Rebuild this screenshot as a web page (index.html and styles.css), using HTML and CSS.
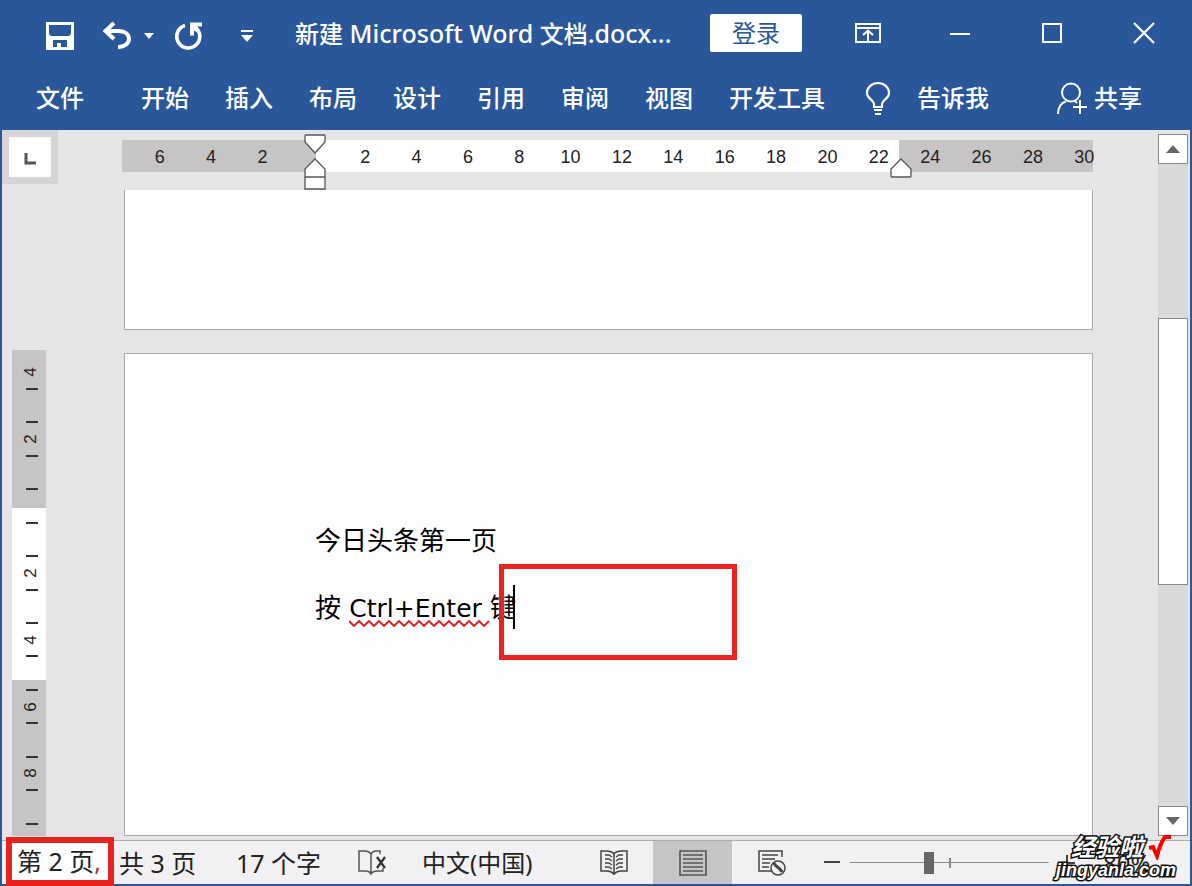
FILE: index.html
```html
<!DOCTYPE html>
<html lang="zh-CN">
<head>
<meta charset="utf-8">
<meta name="viewport" content="width=device-width, initial-scale=1">
<title>新建 Microsoft Word 文档.docx</title>
<link rel="stylesheet" href="styles.css">
</head>
<body>
<div class="window">
  <header class="titlebar">
    <div class="quick">
      <button class="icon-btn save" aria-label="保存"><svg width="30" height="30" viewBox="0 0 30 30"><path fill="#fff" fill-rule="evenodd" d="M1 1h28v28H1zM4 4v9l2 2h18l2-2V4zM8 19v7h14v-7zM12 22h4v4h-4z"/></svg></button>
      <button class="icon-btn undo" aria-label="撤消"><svg width="32" height="30" viewBox="0 0 32 30" fill="none" stroke="#fff" stroke-width="4"><path d="M13 2L4.500 10 13 18M5 10H17C25 10 28 14 28 18S24 26 17 26"/></svg></button>
      <button class="icon-btn undo-more" aria-label="撤消列表"><svg width="12" height="8" viewBox="0 0 12 8"><path fill="#fff" d="M1 1h10L6 7z"/></svg></button>
      <button class="icon-btn redo" aria-label="重复"><svg width="28" height="30" viewBox="0 0 28 30"><path fill="none" stroke="#fff" stroke-width="3.600" d="M10 4.500A11.500 11.500 0 1 0 21 7"/><path fill="#fff" d="M15 1.500h12v4h-5l3 4-3 2-3-2v5h-4z"/></svg></button>
      <button class="icon-btn customize" aria-label="自定义快速访问工具栏"><svg width="14" height="14" viewBox="0 0 14 14"><path fill="#fff" d="M1 1h12v2H1zM1 6h12L7 13z"/></svg></button>
    </div>
    <h1 class="title">新建<span class="latin"> Microsoft Word </span>文档<span class="latin">.docx...</span></h1>
    <button class="login">登录</button>
    <div class="controls">
      <button class="icon-btn" aria-label="功能区显示选项"><svg width="28" height="22" viewBox="0 0 28 22" fill="none" stroke="#fff" stroke-width="2"><path d="M2 2h24v18H2zM2 6h24M14 19V9M9 13l5-4.500 5 4.500"/></svg></button>
      <button class="icon-btn" aria-label="最小化"><svg width="22" height="22" viewBox="0 0 22 22"><path d="M1 12h20" stroke="#fff" stroke-width="2"/></svg></button>
      <button class="icon-btn" aria-label="最大化"><svg width="22" height="22" viewBox="0 0 22 22"><path d="M2 2h18v18H2z" fill="none" stroke="#fff" stroke-width="2"/></svg></button>
      <button class="icon-btn" aria-label="关闭"><svg width="22" height="22" viewBox="0 0 22 22"><path d="M1 1l20 20M21 1L1 21" stroke="#fff" stroke-width="2.200"/></svg></button>
    </div>
  </header>

  <nav class="ribbon">
    <button class="tab file">文件</button>
    <button class="tab">开始</button>
    <button class="tab">插入</button>
    <button class="tab">布局</button>
    <button class="tab">设计</button>
    <button class="tab">引用</button>
    <button class="tab">审阅</button>
    <button class="tab">视图</button>
    <button class="tab">开发工具</button>
    <button class="tab tell"><svg width="26" height="34" viewBox="0 0 26 34" fill="none" stroke="#fff" stroke-width="2.200"><path d="M9 26V23C9 19 2 18 2 12A11 10 0 0 1 24 12C24 18 17 19 17 23V26zM9 29h8M10 33h6"/></svg>告诉我</button>
    <button class="tab share"><svg width="32" height="34" viewBox="0 0 32 34" fill="none" stroke="#fff" stroke-width="2"><circle cx="15" cy="11.500" r="9"/><path d="M2 33C2 26 5 22 10 20.500M24 19v14M17 26h14M19 20l2 2"/></svg>共享</button>
  </nav>

  <main class="workspace">
    <aside class="left">
      <button class="tab-stop" aria-label="左对齐制表符"><svg width="12" height="12" viewBox="0 0 12 12"><path d="M2 0v10h10" fill="none" stroke="#555" stroke-width="3"/></svg></button>
      <div class="vruler">
        <span>4</span><i></i><b></b><i></i><span>2</span><i></i><b></b><i></i><b></b><i></i><b></b><i></i><span>2</span><i></i><b></b><i></i><span>4</span><i></i><b></b><i></i><span>6</span><i></i><b></b><i></i><span>8</span><i></i><b></b><i></i>
      </div>
    </aside>

    <section class="center">
      <div class="hruler">
        <div class="scale">
          <span>6</span><span>4</span><span>2</span>
          <span class="zero"><svg class="indent" width="24" height="58" viewBox="0 0 24 58" fill="#fff" stroke="#555" stroke-width="1.300"><path d="M3 2h18q1 0 1 1v6L12 20 2 9V3q0-1 1-1zM12 26l10 10v20H2V36zM2 44h20"/></svg></span>
          <span>2</span><span>4</span><span>6</span><span>8</span><span>10</span><span>12</span><span>14</span><span>16</span><span>18</span><span>20</span><span>22</span><span class="margin-end"><svg class="right-indent" width="24" height="22" viewBox="0 0 24 22" fill="#fff" stroke="#555" stroke-width="1.300"><path d="M12 2l10 10v7q0 1-1 1H3q-1 0-1-1v-7z"/></svg>24</span><span>26</span><span>28</span><span>30</span>
        </div>
      </div>
      <article class="page page-prev"></article>
      <article class="page page-current">
        <p>今日头条第一页</p>
        <p>按 <span class="typo">Ctrl+Enter<svg class="squiggle" height="7" width="142" viewBox="0 0 142 7"><path fill="none" stroke="#d32a2a" stroke-width="2" d="M0 1l5 5 5-5 5 5 5-5 5 5 5-5 5 5 5-5 5 5 5-5 5 5 5-5 5 5 5-5 5 5 5-5 5 5 5-5 5 5 5-5 5 5 5-5 5 5 5-5 5 5 5-5 5 5 5-5"/></svg></span> <span class="caret-host">键<span class="highlight"></span><span class="caret"></span></span></p>
      </article>
    </section>

    <aside class="scrollbar">
      <button class="scroll-btn" aria-label="向上滚动"><svg width="16" height="10" viewBox="0 0 16 10"><path fill="#666" d="M1 9h14L8 1z"/></svg></button>
      <div class="track"><div class="thumb"></div></div>
      <button class="scroll-btn" aria-label="向下滚动"><svg width="16" height="10" viewBox="0 0 16 10"><path fill="#666" d="M1 1h14L8 9z"/></svg></button>
    </aside>
  </main>

  <footer class="status">
    <div class="page-no"><span class="current">第 2 页<em>,</em></span><span>共 3 页</span></div>
    <span class="words">17 个字</span>
    <button class="icon-btn proof" aria-label="校对"><svg width="30" height="28" viewBox="0 0 30 28" fill="none" stroke="#555" stroke-width="1.500"><path d="M13 5C11 2 8 2 6 2H1v20h7c3 0 4 1 5 3 1-2 3-3 7-3h5v-3M13 5v20M13 5c1-2 3-3 5-3h4v3"/><path stroke="#333" stroke-width="2.200" d="M19 8l8 11M27 8l-8 11"/></svg></button>
    <span class="language">中文(中国)</span>
    <div class="views">
      <button class="view" aria-label="阅读视图"><svg width="28" height="28" viewBox="0 0 28 28" fill="none" stroke="#444" stroke-width="1.500"><path d="M14 5C12 2 9 2 6 2H1v20h6c3 0 5 1 7 3 2-2 4-3 7-3h6V2h-5c-3 0-6 0-8 3zM14 5v21M5 6h4l3 2M5 10h4l3 2M5 14h4l3 2M5 18h4l3 2M23 6h-4l-3 2M23 10h-4l-3 2M23 14h-4l-3 2M23 18h-4l-3 2"/></svg></button>
      <button class="view active" aria-label="页面视图"><svg width="28" height="26" viewBox="0 0 28 26" fill="none" stroke="#555" stroke-width="1.600"><path d="M1 1h26v24H1zM4 5h20M4 9h20M4 13h20M4 17h20M4 21h20"/></svg></button>
      <button class="view" aria-label="Web 版式视图"><svg width="28" height="28" viewBox="0 0 28 28" fill="none" stroke="#444" stroke-width="1.500"><path d="M13 22H1V2h23v6M4 6h16M4 10h13M4 14h8M4 18h7"/><circle cx="20" cy="19" r="7"/><path stroke-width="3" d="M16 14c1 4 6 4 8 9"/></svg></button>
    </div>
    <div class="zoom">
      <button class="icon-btn" aria-label="缩小"><svg width="16" height="6" viewBox="0 0 16 6"><path fill="#444" d="M0 1h16v2H0z"/></svg></button>
      <input class="slider" type="range" min="0" max="200" value="78" aria-label="显示比例">
      <button class="icon-btn" aria-label="放大"><svg width="16" height="16" viewBox="0 0 16 16"><path fill="#444" d="M7 0h2v7h7v2H9v7H7V9H0V7h7z"/></svg></button>
      <span class="percent">80%</span>
    </div>
    <div class="watermark"><span class="brand">经验啦<svg width="24" height="26" viewBox="0 0 24 26"><path d="M2 14l4-1 4 9C12 14 15 7 18 3h6" fill="none" stroke="#f00" stroke-width="4"/></svg></span><span class="domain">jingyanla.com</span></div>
  </footer>
</div>
</body>
</html>
```

FILE: styles.css
```css
* { box-sizing: border-box; }

body {
  margin: 0;
  font-family: "Noto Sans", "Noto Sans CJK SC", sans-serif;
  color: #222;
}

button {
  margin: 0;
  padding: 0;
  border: 0;
  background: none;
  color: inherit;
  font: inherit;
}

svg { display: block; flex: none; }

.window {
  display: flex;
  flex-direction: column;
  min-height: 100vh;
  border: solid #2a579a;
  border-width: 0 2px 2px;
  background: #e6e4e6;
}

/* Title bar */
.titlebar {
  display: flex;
  align-items: center;
  height: 66px;
  background: #2a579a;
  color: #fff;
}

.icon-btn {
  display: flex;
  align-items: center;
  justify-content: center;
}

.quick {
  display: flex;
  align-items: center;
  width: 293px;
  padding: 5px 0 0 43px;
}

.undo { margin-left: 26px; }
.undo-more { margin-left: 10px; }
.redo { margin-left: 20px; }
.customize { margin-left: 37px; }

.title {
  flex: 1;
  margin: 0;
  font-size: 24px;
  line-height: 36px;
  font-weight: 500;
  white-space: nowrap;
}

.latin { font-size: 25px; }

.login {
  width: 92px;
  height: 38px;
  margin-right: 20px;
  border-radius: 2px;
  background: #fff;
  color: #2a579a;
  font-size: 24px;
  line-height: 36px;
}

.controls { display: flex; }
.controls .icon-btn { width: 92px; height: 64px; }

/* Ribbon tabs */
.ribbon {
  display: flex;
  align-items: center;
  gap: 36px;
  height: 64px;
  padding: 0 48px 0 34px;
  background: #2a579a;
  color: #fff;
  font-size: 24px;
  line-height: 36px;
  font-weight: 500;
  white-space: nowrap;
}

.file { margin-right: 21px; }
.tell, .share { display: flex; align-items: center; }
.tell { gap: 26px; margin-left: 4px; }
.share { gap: 6px; margin-left: auto; }

/* Editing area */
.workspace {
  display: grid;
  grid-template-columns: 120px 1fr 97px;
  flex: 1;
  padding-bottom: 4px;
}

.left { display: flex; flex-direction: column; }

.tab-stop {
  display: flex;
  align-items: center;
  justify-content: center;
  width: 56px;
  height: 54px;
  padding-top: 4px;
  border: 7px solid #d6d4d6;
  background: #fdfcfe;
}

.vruler {
  display: grid;
  grid-auto-rows: 1fr;
  flex: 1;
  justify-items: center;
  align-items: center;
  width: 34px;
  margin: 166px 0 0 10px;
  padding: 14px 0 4px;
  background: linear-gradient(#c6c4c5 0 32.5%, #fff 32.5% 68%, #c6c4c5 68%);
}

.vruler span {
  margin-left: 4px;
  font: 17px/16px "Liberation Sans", Arial, sans-serif;
  transform: rotate(-90deg);
}

.vruler i { width: 12px; height: 2px; margin-left: 6px; background: #333; }

.center { display: flex; flex-direction: column; }

.hruler {
  height: 32px;
  margin: 10px 0 18px;
  padding-left: 12px;
  background: linear-gradient(90deg, #c6c4c5 0 20%, #fff 20% 80%, #c6c4c5 80%);
}

.scale {
  display: grid;
  grid-template-columns: repeat(19, 1fr);
  margin-right: -17px;
  font: 18px/34px "Liberation Sans", Arial, sans-serif;
  text-align: center;
}

.zero, .margin-end { position: relative; }
.indent { position: absolute; left: 15px; top: -7px; }
.right-indent { position: absolute; left: -16px; top: 17px; }

.page {
  margin-left: 2px;
  border: 1px solid #aaa8aa;
  background: #fdfcfe;
}

.page-prev { height: 140px; margin-bottom: 23px; border-top: 0; }
.page-current { flex: 1; padding: 167px 190px 0; }

.page p {
  margin: 0 0 27px;
  color: #000;
  font-family: "DejaVu Sans", "Noto Sans CJK SC", sans-serif;
  font-size: 26px;
  line-height: 40px;
  font-weight: 400;
  white-space: nowrap;
}

.typo { position: relative; font-size: 25px; }
.squiggle { position: absolute; left: 0; bottom: -4px; }
.caret-host { position: relative; }

.caret {
  position: absolute;
  right: 1px;
  top: -8px;
  width: 2px;
  height: 44px;
  background: #000;
}

.highlight {
  position: absolute;
  left: 9px;
  top: -29px;
  width: 238px;
  height: 96px;
  border: 5px solid #e8221c;
}

/* Scroll bar */
.scrollbar {
  display: flex;
  flex-direction: column;
  width: 30px;
  margin: 4px 2px 0 auto;
  background: #dad8da;
}

.scroll-btn, .thumb { border: 1px solid #8a888a; background: #fff; }

.scroll-btn {
  display: flex;
  align-items: center;
  justify-content: center;
  height: 30px;
}

.track { flex: 1; padding-top: 154px; }
.thumb { height: 267px; }

/* Status bar */
.status {
  position: relative;
  display: flex;
  align-items: center;
  height: 44px;
  border-top: 1px solid #b0aeb0;
  background: #f2f0f2;
  font-size: 25px;
  line-height: 36px;
  white-space: nowrap;
}

.page-no { display: flex; align-items: center; width: 234px; }

.current {
  width: 108px;
  height: 49px;
  margin: -2px 5px 0 4px;
  padding-left: 5px;
  border: 6px solid #e8221c;
  background: #fdfcfe;
  z-index: 1;
}

.current em { color: #a33; font-style: normal; }
.words { width: 122px; }
.language { margin-left: 34px; font-size: 24px; }
.views { display: flex; align-self: stretch; margin-left: 42px; }

.view {
  display: flex;
  align-items: center;
  justify-content: center;
  width: 79px;
}

.view.active { background: #c6c4c6; }

.zoom { display: flex; align-items: center; flex: 1; margin-left: 13px; }

.slider {
  flex: 1;
  min-width: 0;
  height: 24px;
  margin: 0 10px;
  appearance: none;
  background:
    linear-gradient(#888, #888) 50% 50% / 2px 10px no-repeat,
    linear-gradient(#888, #888) 50% 50% / 100% 1px no-repeat;
}

.slider::-webkit-slider-thumb {
  appearance: none;
  width: 10px;
  height: 22px;
  background: #666;
}

.percent { width: 87px; margin-left: 28px; font-size: 24px; }

.watermark {
  position: absolute;
  right: 14px;
  bottom: 4px;
  display: flex;
  flex-direction: column;
  align-items: flex-end;
  color: #fff;
  paint-order: stroke fill;
  -webkit-text-stroke: 3px #111;
}

.brand {
  display: flex;
  gap: 4px;
  margin-right: 5px;
  font: italic 700 24px/24px "Noto Sans CJK SC", sans-serif;
}

.domain { font: italic 700 18px/20px "Liberation Sans", Arial, sans-serif; }
```
